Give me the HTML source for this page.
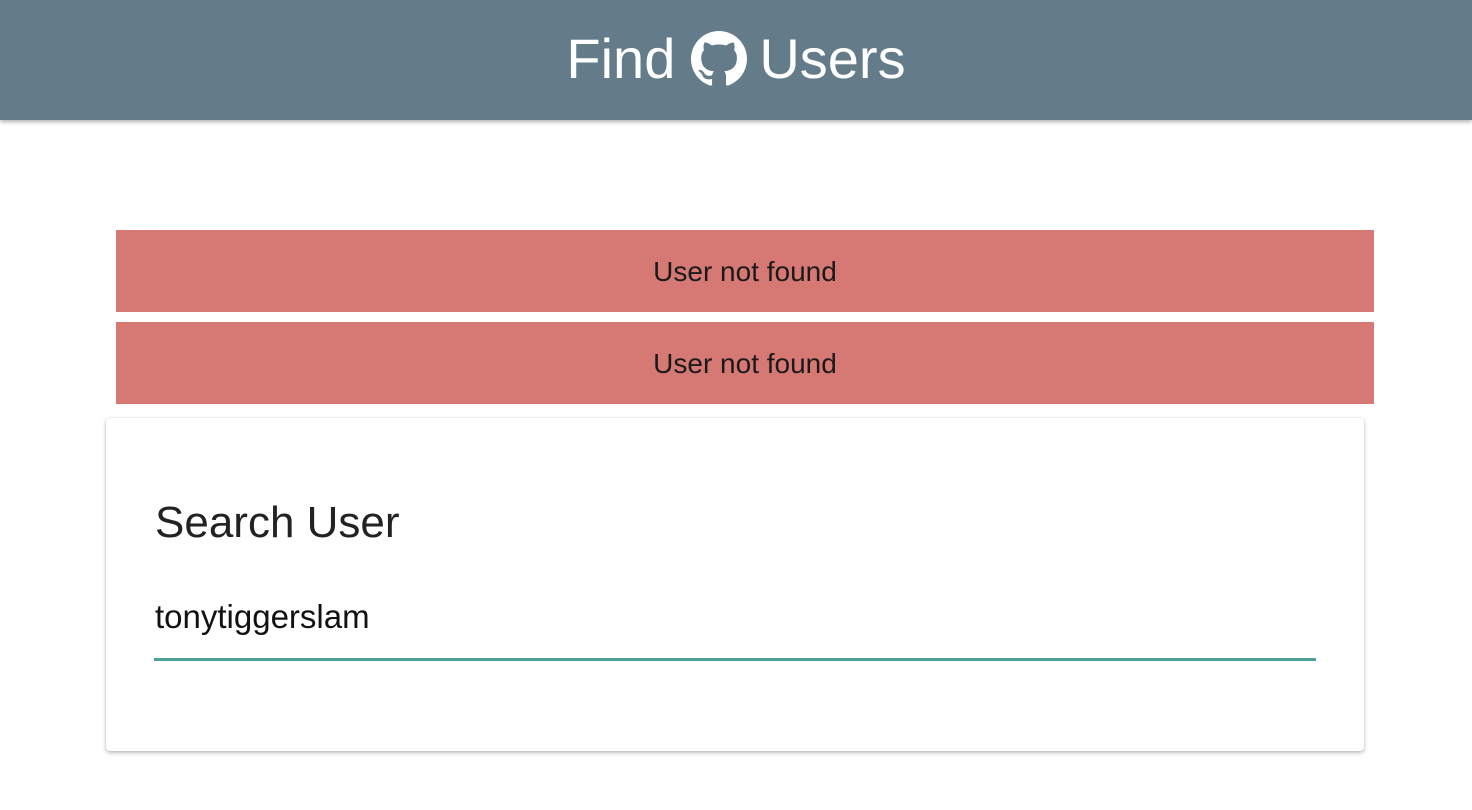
<!DOCTYPE html>
<html><head><style>
body{margin:0;width:1472px;height:810px;background:#fff;font-family:"Liberation Sans",sans-serif;overflow:hidden;position:relative}
.hdr{position:absolute;left:0;top:0;width:1472px;height:120px;background:#647c8a;box-shadow:0 2px 4px rgba(0,0,0,.3)}
.t{position:absolute;top:26px;left:0;width:1472px;text-align:center;color:#fff;font-size:56px;line-height:66px;white-space:nowrap}
.t svg{vertical-align:-9px;margin:0 12px 0 16px}
.al{position:absolute;left:116px;width:1258px;height:82px;background:#d67873;color:#1a1a1a;font-size:28px;line-height:84px;text-align:center}
.card{position:absolute;left:106px;top:418px;width:1258px;height:333px;background:#fff;border-radius:4px;box-shadow:0 2px 4px rgba(0,0,0,.25),0 0 2px rgba(0,0,0,.1)}
.h{position:absolute;left:49px;top:80px;font-size:44px;color:#222;line-height:50px}
.in{position:absolute;left:49px;top:180px;font-size:33px;color:#111;line-height:38px}
.ln{position:absolute;left:48px;top:240px;width:1162px;height:3px;background:#4da197}
</style></head><body>
<div class="hdr"><div class="t">Find<svg width="56" height="56" viewBox="0 0 16 16"><path fill="#fff" d="M8 0C3.58 0 0 3.580 0 8c0 3.54 2.29 6.53 5.470 7.59.4.07.55-.17.55-.38 0-.19-.01-.82-.01-1.49-2.01.37-2.53-.49-2.69-.94-.09-.23-.48-.94-.82-1.130-.28-.15-.68-.52-.01-.53.63-.01 1.080.58 1.23.82.72 1.21 1.87.87 2.33.66.07-.52.28-.87.51-1.07-1.78-.2-3.64-.89-3.640-3.95 0-.87.31-1.59.82-2.15-.08-.2-.36-1.020.08-2.12 0 0 .67-.21 2.2.82.64-.18 1.32-.27 2-.27.68 0 1.36.09 2 .27 1.53-1.04 2.2-.82 2.2-.82.44 1.1.16 1.92.08 2.12.51.56.82 1.27.82 2.15 0 3.07-1.87 3.75-3.65 3.95.29.25.54.73.54 1.48 0 1.07-.01 1.93-.01 2.2 0 .21.15.46.55.38A8.013 8.013 0 0016 8c0-4.42-3.58-8-8-8z"/></svg>Users</div></div>
<div class="al" style="top:230px">User not found</div>
<div class="al" style="top:322px">User not found</div>
<div class="card"><div class="h">Search User</div><div class="in">tonytiggerslam</div><div class="ln"></div></div>
</body></html>
